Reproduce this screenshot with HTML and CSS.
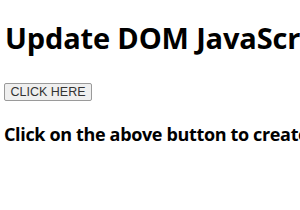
FILE: index.html
```html
<!DOCTYPE html>
<html>
<head>
<meta charset="utf-8">
<link rel="stylesheet" href="styles.css">
</head>
<body>
<h1 class="title">Update DOM JavaScript</h1>
<button class="btn">CLICK HERE</button>
<h3 class="note">Click on the above button to create a new element</h3>
</body>
</html>
```
FILE: styles.css
```css
html, body {
  margin: 0;
  padding: 0;
  background: #fff;
  overflow: hidden;
}
body {
  padding: 0 0 0 4px;
  font-family: "Open Sans", "Noto Sans", sans-serif;
  color: #000;
  white-space: nowrap;
}
.title {
  margin: 21px 0 0 1px;
  font-size: 29px;
  font-weight: 700;
  line-height: 34px;
  letter-spacing: -0.15px;
}
.btn {
  display: block;
  margin: 28px 0 0 0;
  width: 88px;
  height: 18px;
  padding: 0;
  font-family: "Liberation Sans", Arial, sans-serif;
  font-size: 12.5px;
  color: #333;
  background: #efefef;
  border: 1px solid #9a9a9a;
  border-radius: 2px;
}
.note {
  margin: 21px 0 0 0;
  font-size: 18px;
  font-weight: 700;
  line-height: 24px;
  letter-spacing: -0.35px;
}
```
